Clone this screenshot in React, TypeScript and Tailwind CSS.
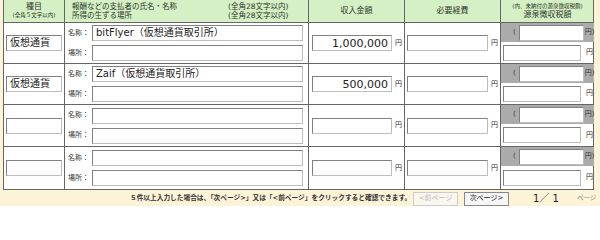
import React from 'react';

const jp = { fontFamily: '"DejaVu Sans", "Noto Sans CJK JP", sans-serif' };

function Box({ className = '', value = '', right = false }: { className?: string; value?: string; right?: boolean }) {
  return (
    <div
      className={`shrink-0 h-[16px] bg-white border border-[#bdbdbd] border-t-[#808080] border-l-[#808080] flex items-center px-[3px] text-[10px] leading-none text-[#222] whitespace-nowrap overflow-hidden ${
        right ? 'justify-end text-[11px]' : ''
      } ${className}`}>
      {value}
    </div>
  );
}

function Yen({ paren = false, gap = 'ml-[3px]' }: { paren?: boolean; gap?: string }) {
  return <span className={`shrink-0 whitespace-nowrap text-[7px] text-[#333] ${gap}`}>{paren ? '円)' : '円'}</span>;
}

interface RowProps {
  kind?: string;
  name?: string;
  amount?: string;
  tall?: boolean;
  last?: boolean;
}

function Row({ kind = '', name = '', amount = '', tall = false, last = false }: RowProps) {
  return (
    <div className={`flex ${tall ? 'h-[42px]' : 'h-[41px]'} ${last ? '' : 'border-b border-[#666]'}`}>
      <div className="w-[61px] shrink-0 border-r border-[#666] flex items-center pl-[2px]">
        <Box className="w-[56px]" value={kind} />
      </div>
      <div className="w-[244px] shrink-0 border-r border-[#666] flex flex-col justify-center gap-[4px] pl-[3px]">
        <div className="flex items-center">
          <span className="shrink-0 whitespace-nowrap text-[7px] text-[#333] w-[24px]">名称：</span>
          <Box className="w-[211px]" value={name} />
        </div>
        <div className="flex items-center">
          <span className="shrink-0 whitespace-nowrap text-[7px] text-[#333] w-[24px]">場所：</span>
          <Box className="w-[211px] h-[15px]" />
        </div>
      </div>
      <div className="w-[96px] shrink-0 border-r border-[#666] flex items-center pl-[3px]">
        <Box className="w-[80px]" value={amount} right />
        <Yen />
      </div>
      <div className="w-[96px] shrink-0 border-r border-[#666] flex items-center pl-[2px]">
        <Box className="w-[81px]" />
        <Yen />
      </div>
      <div className="w-[93px] shrink-0 flex flex-col">
        <div className="h-[19px] bg-[#ababab] flex items-center pl-[12px]">
          <span className="text-[7px] text-[#333] mr-[3px]">(</span>
          <Box className="w-[65px] h-[15px]" />
          <Yen paren gap="ml-[1px]" />
        </div>
        <div className="flex-1 flex items-center pl-[2px]">
          <Box className="w-[78px]" />
          <Yen gap="ml-[5px]" />
        </div>
      </div>
    </div>
  );
}

export default function App() {
  return (
    <div className="w-[600px] h-[206px] bg-[#fdf4d8] pl-[3px] overflow-hidden whitespace-nowrap" style={jp}>
      <div className="w-[591px] border border-t-0 border-[#666] bg-white">
        <div className="flex h-[23px] bg-[#d6f0c6] border-b border-[#666] text-[#2b3626]">
          <div className="w-[61px] shrink-0 border-r border-[#666] flex flex-col items-center justify-center leading-[9px]">
            <span className="text-[8px]">種目</span>
            <span className="text-[5.5px]">(全角５文字以内)</span>
          </div>
          <div className="w-[244px] shrink-0 border-r border-[#666] flex flex-col justify-center pl-[7px] text-[7.5px] leading-[9px]">
            <div className="flex">
              <span className="w-[156px]">報酬などの支払者の氏名・名称</span>
              <span>(全角28文字以内)</span>
            </div>
            <div className="flex">
              <span className="w-[156px]">所得の生ずる場所</span>
              <span>(全角28文字以内)</span>
            </div>
          </div>
          <div className="w-[96px] shrink-0 border-r border-[#666] flex items-center justify-center text-[8px]">収入金額</div>
          <div className="w-[96px] shrink-0 border-r border-[#666] flex items-center justify-center text-[8px]">必要経費</div>
          <div className="w-[93px] shrink-0 flex flex-col items-center justify-center leading-[8px]">
            <span className="text-[5.5px]">(内、未納付の源泉徴収税額)</span>
            <span className="text-[8px] leading-[10px]">源泉徴収税額</span>
          </div>
        </div>
        <Row kind="仮想通貨" name="bitFlyer（仮想通貨取引所）" amount="1,000,000" />
        <Row kind="仮想通貨" name="Zaif（仮想通貨取引所）" amount="500,000" />
        <Row tall />
        <Row tall last />
      </div>
      <div className="flex items-center h-[15px] mt-[1px]">
        <span className="ml-[127px] w-[278px] font-bold text-[6.7px] text-[#333]">
          ５件以上入力した場合は、「次ページ&gt;」又は「&lt;前ページ」をクリックすると確認できます。
        </span>
        <button className="ml-[5px] h-[14px] w-[45px] border border-[#ccc] text-[#bbb] bg-[#faf7ee] text-[7px]">&lt;前ページ</button>
        <button className="ml-[6px] h-[14px] w-[45px] border border-[#888] text-[#222] bg-[#f6f6f6] text-[7px]">次ページ&gt;</button>
        <span className="ml-[24px] text-[10px] text-[#222]">1／ 1</span>
        <span className="ml-[18px] text-[6.5px] text-[#888]">ページ</span>
      </div>
    </div>
  );
}
